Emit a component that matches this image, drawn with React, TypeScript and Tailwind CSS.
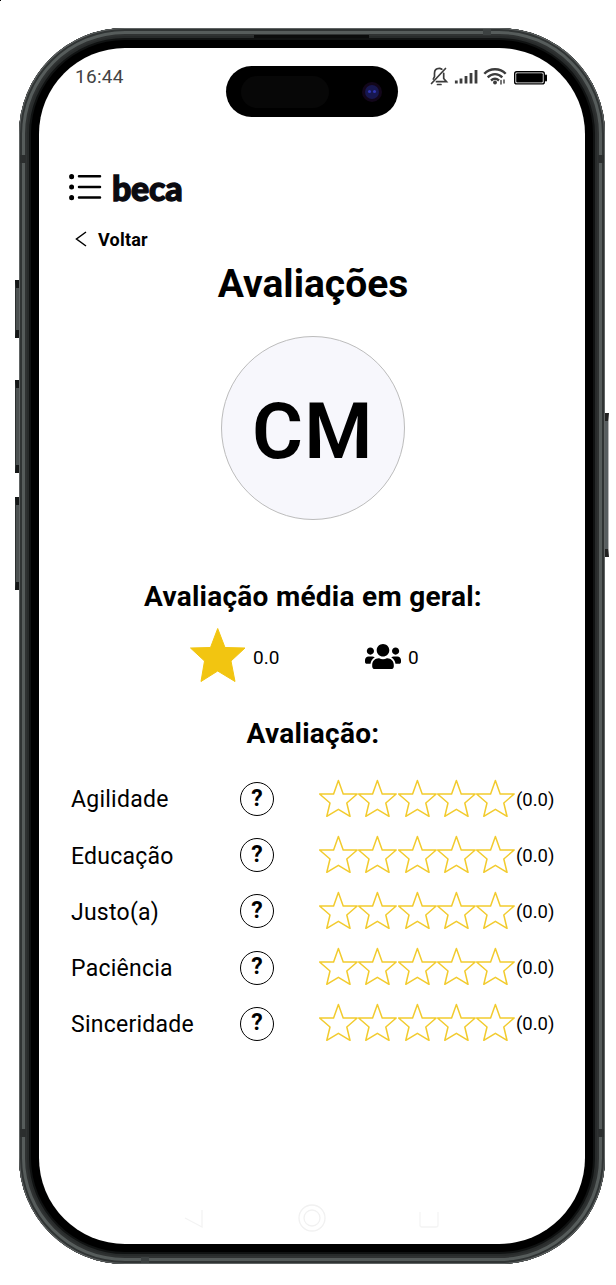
import { FaUsers } from "react-icons/fa"

const ratings = [
    { label: "Agilidade", score: "0.0" },
    { label: "Educação", score: "0.0" },
    { label: "Justo(a)", score: "0.0" },
    { label: "Paciência", score: "0.0" },
    { label: "Sinceridade", score: "0.0" },
]

const Star = () => {
    return <svg width="39.3" height="39" viewBox="0 0 39.3 39" className="shrink-0" fill="none" stroke="#f2cb2e" strokeWidth="1.5" strokeLinejoin="round">
        <path d="M19.4 1.5L24.2 15H38.2L27.8 24L31 37.3L19.4 30.3L7.8 37.3L11 24L0.6 15H14.6Z" />
    </svg>
}

const StatusIcons = () => {
    return <svg width="120" height="24" viewBox="0 0 120 24" fill="none" stroke="#3c3c3c" strokeWidth="1.7" strokeLinecap="round">
        {/* muted bell */}
        <path d="M2.5 18.5L16.5 3.5M4.3 14L5.5 11.5V8.3C5.5 5.3 7 3.3 10.3 3.3C11.3 3.3 12 3.6 12.8 4.2M14.7 8.3V13.5L17.5 16.7H7.5M8.5 19.5H12" />
        {/* signal */}
        <g strokeWidth="2.8" strokeLinecap="butt">
            <path d="M27.3 15.5V18.5M32 13.5V18.5M37 11V18.5M42 8V18.5M47 5V18.5" />
        </g>
        {/* wifi */}
        <g strokeWidth="2.4" strokeLinecap="butt">
            <path d="M55.3 8.8C61 2.7 71 2.7 76.7 8.8M58.7 12.3C63 8 69 8 73.3 12.3M62 15.5C64.5 13.2 67.5 13.2 70 15.5" />
        </g>
        <circle cx="66" cy="17.5" r="1.9" fill="#3c3c3c" stroke="none" />
        <path d="M72 15.5V19M75 15V18" strokeWidth="1.4" />
        {/* battery */}
        <rect x="85.7" y="6.7" width="29.6" height="12.2" rx="2" stroke="#000" strokeWidth="1.4" />
        <rect x="87.2" y="8.2" width="26.6" height="9.2" rx="1" fill="#000" stroke="none" />
        <path d="M117 10.5V15.5" stroke="#000" strokeWidth="2" />
    </svg>
}

const Header = () => {
    return <div className="flex h-8 items-center gap-2.5 pl-[30px]">
        <svg width="33" height="28" viewBox="0 0 33 28" stroke="#000" strokeWidth="2.5" strokeLinecap="round">
            <path d="M10 2.2H31M10 13H31M10 23.6H31" />
            <path d="M2.6 2.6V2.7M2.6 13V13.1M2.6 23.6V23.7" strokeWidth="5" />
        </svg>
        <span className="font-[Lato] text-[34px] leading-10 font-black tracking-[-0.3px] text-[#0b0a10] [-webkit-text-stroke:1.3px_#0b0a10]">beca</span>
    </div>
}

const Rating = ({ label, score }: { label: string, score: string }) => {
    return <div className="flex h-[56.2px] items-center">
        <span className="w-[169px] pt-px text-[23px] tracking-[0.25px]">{label}</span>
        <div className="-mt-0.5 flex size-[34px] items-center justify-center rounded-full border-[1.5px] border-black text-[23px] leading-none font-bold">
            <span className="-mt-0.5">?</span>
        </div>
        <div className="-mt-1 ml-[45px] flex">
            <Star />
            <Star />
            <Star />
            <Star />
            <Star />
        </div>
        <span className="pt-px pl-[0.5px] text-[18.5px]">({score})</span>
    </div>
}

const Screen = () => {
    return <div className="relative flex h-full w-full flex-col overflow-hidden rounded-[86px] bg-white">
        <div className="mt-[17px] flex h-6 items-center justify-between pr-9 pl-9">
            <span className="text-[19px] tracking-[0.3px] text-[#444]">16:44</span>
            <StatusIcons />
        </div>

        {/* camera cutout */}
        <div className="absolute top-[18px] left-[187px] flex h-[51px] w-[172px] items-center justify-end rounded-full bg-black pr-4">
            <div className="mr-[33px] h-8 w-[88px] rounded-full bg-[#070707]"></div>
            <div className="flex size-5 items-center justify-center rounded-full bg-[#12061a]">
                <div className="flex size-3.5 items-center justify-center gap-0.5 rounded-full bg-[#17174f]">
                    <div className="size-[3px] rounded-full bg-[#3036b4]"></div>
                    <div className="size-[3px] rounded-full bg-[#3036b4]"></div>
                </div>
            </div>
        </div>

        <div className="mt-[83px]">
            <Header />
        </div>

        <div className="mt-[23px] flex h-6 items-center gap-[11px] pl-9">
            <svg width="12" height="16" viewBox="0 0 12 16" fill="none" stroke="#000" strokeWidth="1.5">
                <path d="M11 1L1.5 8L11 15" />
            </svg>
            <span className="pt-px text-[18px] font-bold tracking-[0.2px]">Voltar</span>
        </div>

        <h1 className="mt-[9px] pl-0.5 text-center text-[39px] leading-[48px] font-bold">Avaliações</h1>

        <div className="mt-7 ml-[182px] flex size-[184px] items-center justify-center rounded-full border border-[#bcbcbc] bg-[#f7f7fc]">
            <span className="pt-2 text-[78px] leading-none font-semibold tracking-[1.5px]">CM</span>
        </div>

        <h2 className="mt-[57px] pl-0.5 text-center text-[28px] leading-10 font-bold tracking-[0.27px]">Avaliação média em geral:</h2>

        <div className="mt-2 flex h-[64px] items-center pl-[150px]">
            <svg width="58" height="56" viewBox="0 0 58 56" className="-mt-0.5" fill="#f2c511" stroke="#f2c511" strokeLinejoin="round">
                <path d="M28.7 0.5L36 19.5L56 20L42 33L46 53.5L28.7 43L12 53.5L15.5 33L1.5 20L21.5 19.5Z" />
            </svg>
            <span className="ml-1.5 w-[112px] pt-0.5 text-[19px]">0.0</span>
            <FaUsers className="-mt-0.5 h-[29px] w-9" />
            <span className="ml-[7px] pt-0.5 text-[19px]">0</span>
        </div>

        <h2 className="mt-[25px] pl-0.5 text-center text-[28px] leading-10 font-bold tracking-[0.27px]">Avaliação:</h2>

        <div className="mt-[18px] flex flex-col pl-8">
            {ratings.map((rating) => {
                return <Rating key={rating.label} {...rating} />
            })}
        </div>

        {/* navigation keys */}
        <div className="mt-auto mb-3 flex h-7 items-center justify-center gap-[91px] pr-0.5">
            <svg width="26" height="26" viewBox="0 0 26 26" fill="none" stroke="#f3f3f3" strokeWidth="1.3">
                <path d="M4 13L21 22V5" />
            </svg>
            <svg width="28" height="28" viewBox="0 0 28 28" fill="none" stroke="#f1f1f1" strokeWidth="1.3">
                <circle cx="14" cy="14" r="13" />
                <circle cx="14" cy="14" r="8" />
            </svg>
            <svg width="24" height="24" viewBox="0 0 24 24" fill="none" stroke="#f4f4f4" strokeWidth="1.3">
                <path d="M3 6V19Q3 21 5 21H19Q21 21 21 19V6" />
            </svg>
        </div>
    </div>
}

const App = () => {
    return (
        <div className="relative h-[1285px] w-[616px] overflow-hidden bg-white pt-[28px] pl-[19px] font-[Roboto,sans-serif] text-black">
            <div className="absolute top-0 left-0 size-px bg-black"></div>

            {/* side buttons */}
            <div className="absolute top-[280px] left-[15px] h-[58px] w-1.5 border-y-8 border-l border-y-[#151717] border-l-[#2c3030] bg-[#4c5151]"></div>
            <div className="absolute top-[380px] left-[15px] h-[93px] w-1.5 border-y-8 border-l border-y-[#151717] border-l-[#2c3030] bg-[#4c5151]"></div>
            <div className="absolute top-[497px] left-[15px] h-[93px] w-1.5 border-y-8 border-l border-y-[#151717] border-l-[#2c3030] bg-[#4c5151]"></div>
            <div className="absolute top-[413px] left-[604px] h-[144px] w-[5px] border-y-8 border-r border-y-[#222] border-r-[#b8b8b8] bg-[#585e60]"></div>

            <div className="relative h-[1236px] w-[586px] rounded-[106px] bg-black p-5 shadow-[inset_0_0_0_1px_#606464,inset_0_0_0_3px_#303434,inset_0_0_0_6px_#565c5b,inset_0_0_0_8px_#2f3232,inset_0_0_0_10px_#282b2b,inset_0_0_0_12px_#101212]">
                {/* speaker slot and antenna lines */}
                <div className="absolute top-[7px] left-[235px] h-[3px] w-[115px] bg-[#0b0c0c]"></div>
                <div className="absolute top-[127px] left-px h-2 w-1.5 bg-[#2b2e2e]"></div>
                <div className="absolute top-[127px] right-px h-2 w-1.5 bg-[#2b2e2e]"></div>
                <div className="absolute bottom-[127px] left-px h-2 w-1.5 bg-[#2b2e2e]"></div>
                <div className="absolute right-px bottom-[127px] h-2 w-1.5 bg-[#2b2e2e]"></div>
                <div className="absolute top-px right-[114px] h-1.5 w-2 bg-[#3c4141]"></div>
                <div className="absolute bottom-px left-[122px] h-1.5 w-2 bg-[#3c4141]"></div>
                <Screen />
            </div>
        </div>
    )
}

export default App
